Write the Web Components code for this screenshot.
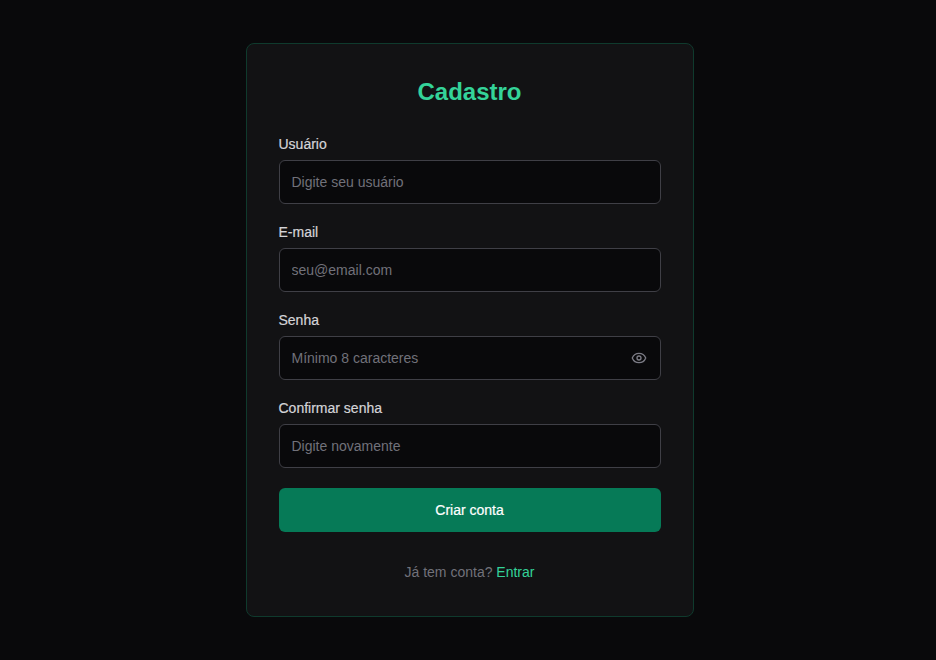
<!DOCTYPE html>
<html lang="pt-BR"><head><meta charset="utf-8"><title>Cadastro</title>
<style>
html,body{margin:0;height:100%;background:#09090b}
body{font-family:"Liberation Sans",Arial,sans-serif;font-size:14px;line-height:20px;color:#e4e4e7}
</style></head><body>
<signup-page></signup-page>
<script>
class SignupPage extends HTMLElement{
  constructor(){super();this.attachShadow({mode:'open'}).innerHTML=`<style>
  :host{display:flex;min-height:100vh;align-items:center;justify-content:center;padding-left:3px;box-sizing:border-box}
  submit-button{margin-top:4px}
  </style><signup-card heading="Cadastro">
    <form-field label="Usuário" placeholder="Digite seu usuário"></form-field>
    <form-field label="E-mail" placeholder="seu@email.com"></form-field>
    <form-field label="Senha" type="password" placeholder="Mínimo 8 caracteres"><eye-icon slot="suffix"></eye-icon></form-field>
    <form-field label="Confirmar senha" type="password" placeholder="Digite novamente"></form-field>
    <submit-button>Criar conta</submit-button>
    <login-hint slot="footer" action="Entrar">Já tem conta?</login-hint>
  </signup-card>`}
}
class SignupCard extends HTMLElement{
  constructor(){super();this.attachShadow({mode:'open'})}
  connectedCallback(){this.shadowRoot.innerHTML=`<style>
  :host{display:block;box-sizing:border-box;width:448px;height:574px;padding:32px;border:1px solid #0f3a2d;border-radius:8px;background:#121214}
  h1{margin:0 0 24px;font-size:24px;line-height:32px;font-weight:700;text-align:center;color:#34d399}
  form{display:flex;flex-direction:column;gap:16px;margin:0}
  footer{margin-top:30px}
  </style><h1>${this.getAttribute('heading')}</h1><form><slot></slot></form><footer><slot name="footer"></slot></footer>`}
}
class FormField extends HTMLElement{
  constructor(){super();this.attachShadow({mode:'open'})}
  connectedCallback(){this.shadowRoot.innerHTML=`<style>
  :host{display:block}
  label{display:block;margin-bottom:4px;line-height:24px;color:#d4d4d8;-webkit-text-stroke:.2px}
  .box{display:flex;align-items:center;box-sizing:border-box;height:44px;padding:0 12px;border:1px solid #3f3f46;border-radius:6px;background:#09090b}
  input{flex:1;min-width:0;padding:0;border:0;outline:0;background:transparent;font:inherit;color:#e4e4e7}
  input::placeholder{color:#71717a;opacity:1}
  </style><label for="f">${this.getAttribute('label')}</label><div class="box"><input id="f" type="${this.getAttribute('type')||'text'}" placeholder="${this.getAttribute('placeholder')}"><slot name="suffix"></slot></div>`}
}
class EyeIcon extends HTMLElement{
  constructor(){super();this.attachShadow({mode:'open'}).innerHTML=`<style>:host{display:block;width:16px;height:16px;margin-right:1px;color:#7c7c86}svg{display:block}</style>
  <svg width="16" height="16" viewBox="0 0 24 24" fill="none" stroke="currentColor" stroke-width="2" stroke-linecap="round" stroke-linejoin="round"><path d="M2.062 12.348a1 1 0 0 1 0-.696 10.75 10.75 0 0 1 19.876 0 1 1 0 0 1 0 .696 10.75 10.75 0 0 1-19.876 0"/><circle cx="12" cy="12" r="3"/></svg>`}
}
class SubmitButton extends HTMLElement{
  constructor(){super();this.attachShadow({mode:'open'}).innerHTML=`<style>:host{display:block}
  button{display:block;width:100%;height:44px;padding:0;border:0;border-radius:6px;background:#067a57;color:#fff;font:inherit;-webkit-text-stroke:.2px}</style><button type="button"><slot></slot></button>`}
}
class LoginHint extends HTMLElement{
  constructor(){super();this.attachShadow({mode:'open'})}
  connectedCallback(){this.shadowRoot.innerHTML=`<style>:host{display:block;text-align:center;color:#71717a}a{color:#34d399;text-decoration:none}</style><slot></slot> <a href="#">${this.getAttribute('action')}</a>`}
}
customElements.define('eye-icon',EyeIcon);
customElements.define('form-field',FormField);
customElements.define('submit-button',SubmitButton);
customElements.define('login-hint',LoginHint);
customElements.define('signup-card',SignupCard);
customElements.define('signup-page',SignupPage);
</script></body></html>
